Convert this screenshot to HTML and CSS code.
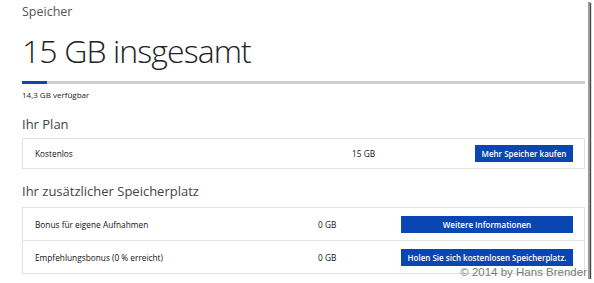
FILE: index.html
```html
<!DOCTYPE html>
<html lang="de">
<head>
    <meta charset="UTF-8">
    <meta name="viewport" content="width=device-width, initial-scale=1.0">
    <title>Speicher</title>
    <link rel="stylesheet" href="styles.css">
</head>
<body>

<div class="frame">
    <div class="page">
        <div class="page-title">Speicher</div>
        <h1 class="total">15 GB insgesamt</h1>

        <div class="usage-bar">
            <div class="usage-fill" style="width: 4.4%"></div>
        </div>
        <div class="usage-text">14,3 GB verfügbar</div>

        <h2 class="section-title">Ihr Plan</h2>
        <div class="box box-plan">
            <div class="row">
                <span class="row-name">Kostenlos</span>
                <span class="row-value">15 GB</span>
                <button class="action-button">Mehr Speicher kaufen</button>
            </div>
        </div>

        <h2 class="section-title">Ihr zusätzlicher Speicherplatz</h2>
        <div class="box box-extra">
            <div class="row">
                <span class="row-name">Bonus für eigene Aufnahmen</span>
                <span class="row-value">0 GB</span>
                <button class="action-button">Weitere Informationen</button>
            </div>
            <div class="row">
                <span class="row-name">Empfehlungsbonus (0 % erreicht)</span>
                <span class="row-value">0 GB</span>
                <button class="action-button">Holen Sie sich kostenlosen Speicherplatz.</button>
            </div>
        </div>
    </div>

    <div class="watermark">© 2014 by Hans Brender</div>
</div>

</body>
</html>
```

FILE: styles.css
```css
html, body {
    margin: 0;
    padding: 0;
    background-color: #ffffff;
}

body {
    font-family: 'Segoe UI', 'Open Sans', sans-serif;
    color: #222222;
}

.frame {
    position: relative;
    width: 588px;
    height: 279px;
    overflow: hidden;
    background-color: #ffffff;
    box-shadow: 2px 2px 0 #9a9a9a, 3px 3px 1px #444444;
}

.page {
    padding: 4px 0 0 22px;
    width: 563px;
}

.page-title {
    font-size: 12.5px;
    line-height: 16px;
    color: #555555;
}

.total {
    margin: 11px 0 0;
    font-size: 32px;
    font-weight: 300;
    line-height: 40px;
    color: #222222;
    letter-spacing: -0.9px;
}

.usage-bar {
    margin-top: 10px;
    height: 3px;
    background-color: #cfcfcf;
}

.usage-fill {
    height: 100%;
    background-color: #1346a8;
}

.usage-text {
    margin-top: 5px;
    font-size: 8px;
    line-height: 12px;
    color: #222222;
}

.section-title {
    margin: 14px 0 0;
    font-size: 13px;
    font-weight: 400;
    line-height: 18px;
    color: #444444;
}

.box {
    margin-top: 5px;
    border: 1px solid #e2e2e2;
}

.box + .section-title {
    margin-top: 13px;
}

.row {
    display: grid;
    align-items: center;
    height: 29px;
    padding: 0 11px 0 12px;
    font-size: 8.3px;
    color: #111111;
}

.row + .row {
    border-top: 1px solid #e2e2e2;
}

.box-plan .row {
    grid-template-columns: 317px 1fr 98px;
}

.box-extra {
    margin-top: 7px;
}

.box-extra .row {
    grid-template-columns: 283px 1fr 172px;
    height: 32px;
}

.action-button {
    height: 17px;
    padding: 0;
    border: none;
    background-color: #0a46b2;
    color: #ffffff;
    font-family: inherit;
    font-size: 8px;
    font-weight: 600;
    cursor: pointer;
}

.watermark {
    position: absolute;
    right: 1px;
    bottom: 0;
    font-family: 'Liberation Sans', Arial, sans-serif;
    font-size: 11.5px;
    line-height: 14px;
    color: #7a7a7a;
}
```
